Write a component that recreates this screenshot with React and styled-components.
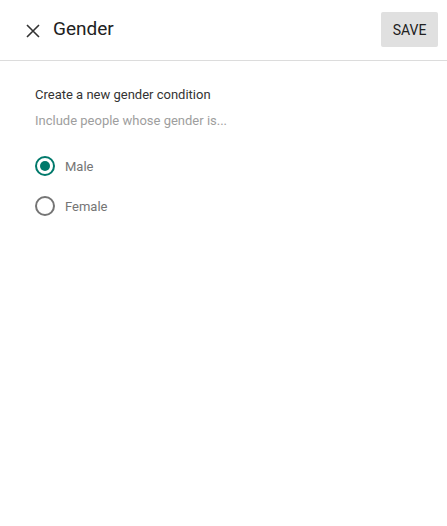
import React, { useState } from "react";
import styled, { createGlobalStyle } from "styled-components";

const GlobalStyle = createGlobalStyle`
  body {
    margin: 0;
    background: #fff;
    font-family: Roboto, "Liberation Sans", sans-serif;
  }
`;

const options = ["Male", "Female"];

function App() {
  const [gender, setGender] = useState("Male");

  return (
    <>
      <GlobalStyle />
      <Page>
        <Header>
          <CloseButton aria-label="close">
            <svg width="14" height="14" viewBox="0 0 14 14">
              <path d="M1 1 L13 13 M13 1 L1 13" stroke="#333" strokeWidth="1.6" />
            </svg>
          </CloseButton>
          <Title>Gender</Title>
          <SaveButton>Save</SaveButton>
        </Header>
        <Body>
          <Heading>Create a new gender condition</Heading>
          <Hint>Include people whose gender is...</Hint>
          <RadioList>
            {options.map((opt) => (
              <RadioRow key={opt} onClick={() => setGender(opt)}>
                <Radio checked={gender === opt} />
                <Label>{opt}</Label>
              </RadioRow>
            ))}
          </RadioList>
        </Body>
      </Page>
    </>
  );
}

const Page = styled.div`
  width: 447px;
  min-height: 526px;
  background: #fff;
`;

const Header = styled.div`
  display: flex;
  align-items: center;
  height: 61px;
  box-sizing: border-box;
  padding: 0 9px 0 24px;
  border-bottom: 1px solid #dcdcdc;
`;

const CloseButton = styled.button`
  border: none;
  background: none;
  padding: 0;
  width: 18px;
  height: 18px;
  display: flex;
  align-items: center;
  justify-content: center;
  margin-top: 1px;
  cursor: pointer;
`;

const Title = styled.div`
  margin-left: 11px;
  font-size: 19px;
  color: #212121;
  flex: 1;
  margin-bottom: 4px;
`;

const SaveButton = styled.button`
  border: none;
  border-radius: 2px;
  background: #e0e0e0;
  color: #212121;
  font-family: Roboto, "Liberation Sans", sans-serif;
  font-size: 14px;
  text-transform: uppercase;
  width: 57px;
  height: 35px;
  margin-top: -1px;
  cursor: pointer;
`;

const Body = styled.div`
  padding: 25px 35px;
`;

const Heading = styled.div`
  font-size: 13px;
  color: #333;
  line-height: 18px;
`;

const Hint = styled.div`
  font-size: 13px;
  color: #9e9e9e;
  line-height: 18px;
  margin-top: 8px;
`;

const RadioList = styled.div`
  display: flex;
  flex-direction: column;
  gap: 20px;
  margin-top: 26px;
`;

const RadioRow = styled.div`
  display: flex;
  align-items: center;
  height: 20px;
  cursor: pointer;
`;

const Radio = styled.span`
  width: 20px;
  height: 20px;
  box-sizing: border-box;
  border-radius: 50%;
  border: 2px solid ${(p) => (p.checked ? "#00796b" : "#757575")};
  display: flex;
  align-items: center;
  justify-content: center;

  &::after {
    content: "";
    width: 10px;
    height: 10px;
    border-radius: 50%;
    background: #00796b;
    display: ${(p) => (p.checked ? "block" : "none")};
  }
`;

const Label = styled.span`
  margin-left: 10px;
  font-size: 13px;
  color: #757575;
`;

export default App;
